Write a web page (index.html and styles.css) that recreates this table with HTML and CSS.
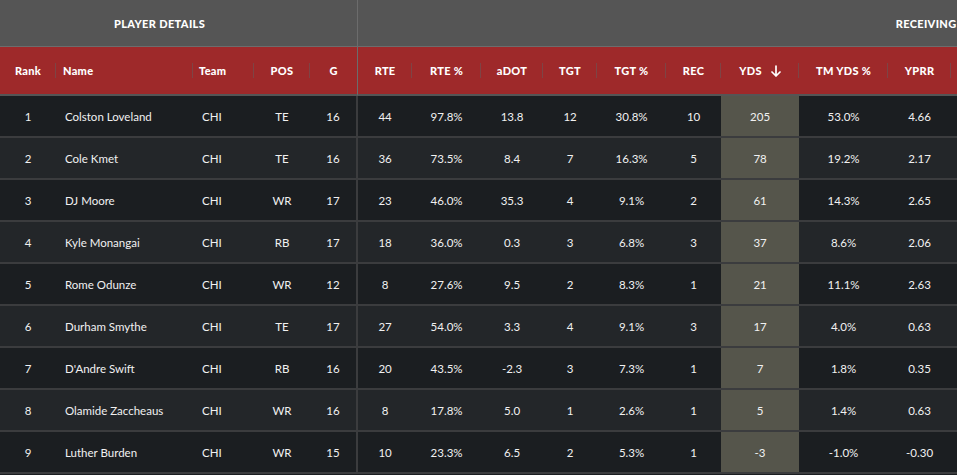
FILE: index.html
```html
<!DOCTYPE html>
<html lang="en">
<head>
<meta charset="utf-8">
<title>Receiving</title>
<link rel="stylesheet" href="styles.css">
</head>
<body>
<table class="stats">
  <colgroup>
    <col class="c-rank"><col class="c-name"><col class="c-team"><col class="c-pos"><col class="c-g">
    <col class="c-rte"><col class="c-rtep"><col class="c-adot"><col class="c-tgt"><col class="c-tgtp">
    <col class="c-rec"><col class="c-yds"><col class="c-tmyds"><col class="c-yprr"><col class="c-rest">
  </colgroup>
  <thead>
    <tr class="group-row">
      <th colspan="5" class="group group-end player-group">PLAYER DETAILS</th>
      <th colspan="10" class="group">RECEIVING</th>
    </tr>
    <tr class="head-row">
      <th>Rank</th>
      <th class="left">Name</th>
      <th class="left team">Team</th>
      <th>POS</th>
      <th class="group-end">G</th>
      <th>RTE</th>
      <th>RTE %</th>
      <th>aDOT</th>
      <th>TGT</th>
      <th>TGT %</th>
      <th>REC</th>
      <th class="sorted">YDS <svg class="arrow" width="10" height="12" viewBox="0 0 10 12"><path d="M5 1V11M1 7L5 11L9 7" fill="none" stroke="#fff" stroke-width="1.7" stroke-linecap="round" stroke-linejoin="round"/></svg></th>
      <th>TM YDS %</th>
      <th>YPRR</th>
      <th class="last"></th>
    </tr>
  </thead>
  <tbody>
    <tr><td>1</td><td class="left">Colston Loveland</td><td class="left team">CHI</td><td>TE</td><td class="group-end">16</td><td>44</td><td>97.8%</td><td>13.8</td><td>12</td><td>30.8%</td><td>10</td><td class="hl">205</td><td>53.0%</td><td>4.66</td><td></td></tr>
    <tr><td>2</td><td class="left">Cole Kmet</td><td class="left team">CHI</td><td>TE</td><td class="group-end">16</td><td>36</td><td>73.5%</td><td>8.4</td><td>7</td><td>16.3%</td><td>5</td><td class="hl">78</td><td>19.2%</td><td>2.17</td><td></td></tr>
    <tr><td>3</td><td class="left">DJ Moore</td><td class="left team">CHI</td><td>WR</td><td class="group-end">17</td><td>23</td><td>46.0%</td><td>35.3</td><td>4</td><td>9.1%</td><td>2</td><td class="hl">61</td><td>14.3%</td><td>2.65</td><td></td></tr>
    <tr><td>4</td><td class="left">Kyle Monangai</td><td class="left team">CHI</td><td>RB</td><td class="group-end">17</td><td>18</td><td>36.0%</td><td>0.3</td><td>3</td><td>6.8%</td><td>3</td><td class="hl">37</td><td>8.6%</td><td>2.06</td><td></td></tr>
    <tr><td>5</td><td class="left">Rome Odunze</td><td class="left team">CHI</td><td>WR</td><td class="group-end">12</td><td>8</td><td>27.6%</td><td>9.5</td><td>2</td><td>8.3%</td><td>1</td><td class="hl">21</td><td>11.1%</td><td>2.63</td><td></td></tr>
    <tr><td>6</td><td class="left">Durham Smythe</td><td class="left team">CHI</td><td>TE</td><td class="group-end">17</td><td>27</td><td>54.0%</td><td>3.3</td><td>4</td><td>9.1%</td><td>3</td><td class="hl">17</td><td>4.0%</td><td>0.63</td><td></td></tr>
    <tr><td>7</td><td class="left">D'Andre Swift</td><td class="left team">CHI</td><td>RB</td><td class="group-end">16</td><td>20</td><td>43.5%</td><td>-2.3</td><td>3</td><td>7.3%</td><td>1</td><td class="hl">7</td><td>1.8%</td><td>0.35</td><td></td></tr>
    <tr><td>8</td><td class="left">Olamide Zaccheaus</td><td class="left team">CHI</td><td>WR</td><td class="group-end">16</td><td>8</td><td>17.8%</td><td>5.0</td><td>1</td><td>2.6%</td><td>1</td><td class="hl">5</td><td>1.4%</td><td>0.63</td><td></td></tr>
    <tr><td>9</td><td class="left">Luther Burden</td><td class="left team">CHI</td><td>WR</td><td class="group-end">15</td><td>10</td><td>23.3%</td><td>6.5</td><td>2</td><td>5.3%</td><td>1</td><td class="hl">-3</td><td>-1.0%</td><td>-0.30</td><td></td></tr>
  </tbody>
</table>
</body>
</html>
```

FILE: styles.css
```css
html, body {
  margin: 0;
  padding: 0;
  background: #1b1e21;
  overflow: hidden;
}

body {
  font-family: Lato, "Noto Sans", "Liberation Sans", sans-serif;
  color: #f1f1f1;
}

.stats {
  border-collapse: separate;
  border-spacing: 0;
  table-layout: fixed;
  width: 1494px;
}

.c-rank { width: 56px; }
.c-name { width: 137px; }
.c-team { width: 61px; }
.c-pos { width: 56px; }
.c-g { width: 48px; }
.c-rte { width: 54px; }
.c-rtep { width: 69px; }
.c-adot { width: 62px; }
.c-tgt { width: 54px; }
.c-tgtp { width: 69px; }
.c-rec { width: 55px; }
.c-yds { width: 78px; }
.c-tmyds { width: 89px; }
.c-yprr { width: 63px; }
.c-rest { width: 543px; }

th, td {
  padding: 0;
  text-align: center;
  white-space: nowrap;
  overflow: hidden;
}

.group-row th {
  height: 46px;
  background: #555555;
  border-bottom: 1px solid #6c6c6c;
  font-size: 11px;
  font-weight: 900;
  letter-spacing: 0.35px;
  color: #ffffff;
  vertical-align: middle;
}

.group-row th.group-end {
  border-right: 1px solid #6c6c6c;
}

.group-row th.player-group {
  padding-right: 38px;
}

.head-row th {
  position: relative;
  height: 47px;
  background: #9e292a;
  border-bottom: 2px solid #555555;
  font-size: 11px;
  font-weight: 900;
  letter-spacing: 0.3px;
  color: #ffffff;
  vertical-align: middle;
}

.head-row th::after {
  content: "";
  position: absolute;
  right: 0;
  top: 16px;
  height: 15px;
  width: 1px;
  background: #7e4445;
}

.head-row th.group-end {
  border-right: 1px solid #6c6c6c;
}

.head-row th.group-end::after,
.head-row th.last::after {
  display: none;
}

th.left, td.left {
  text-align: left;
  padding-left: 9px;
}

th.left { padding-left: 7px; }
th.team { padding-left: 6px; }

.arrow {
  vertical-align: -2px;
  margin-left: 6px;
}

tbody td {
  height: 40px;
  font-size: 11.5px;
  border-bottom: 2px solid #3b3c3e;
  vertical-align: middle;
  background: #1b1e21;
}

tbody tr:nth-child(even) td {
  background: #232629;
}

tbody td.group-end {
  border-right: 2px solid #3b3c3e;
}

tbody td.hl,
tbody tr:nth-child(even) td.hl {
  background: #55554b;
}
```
